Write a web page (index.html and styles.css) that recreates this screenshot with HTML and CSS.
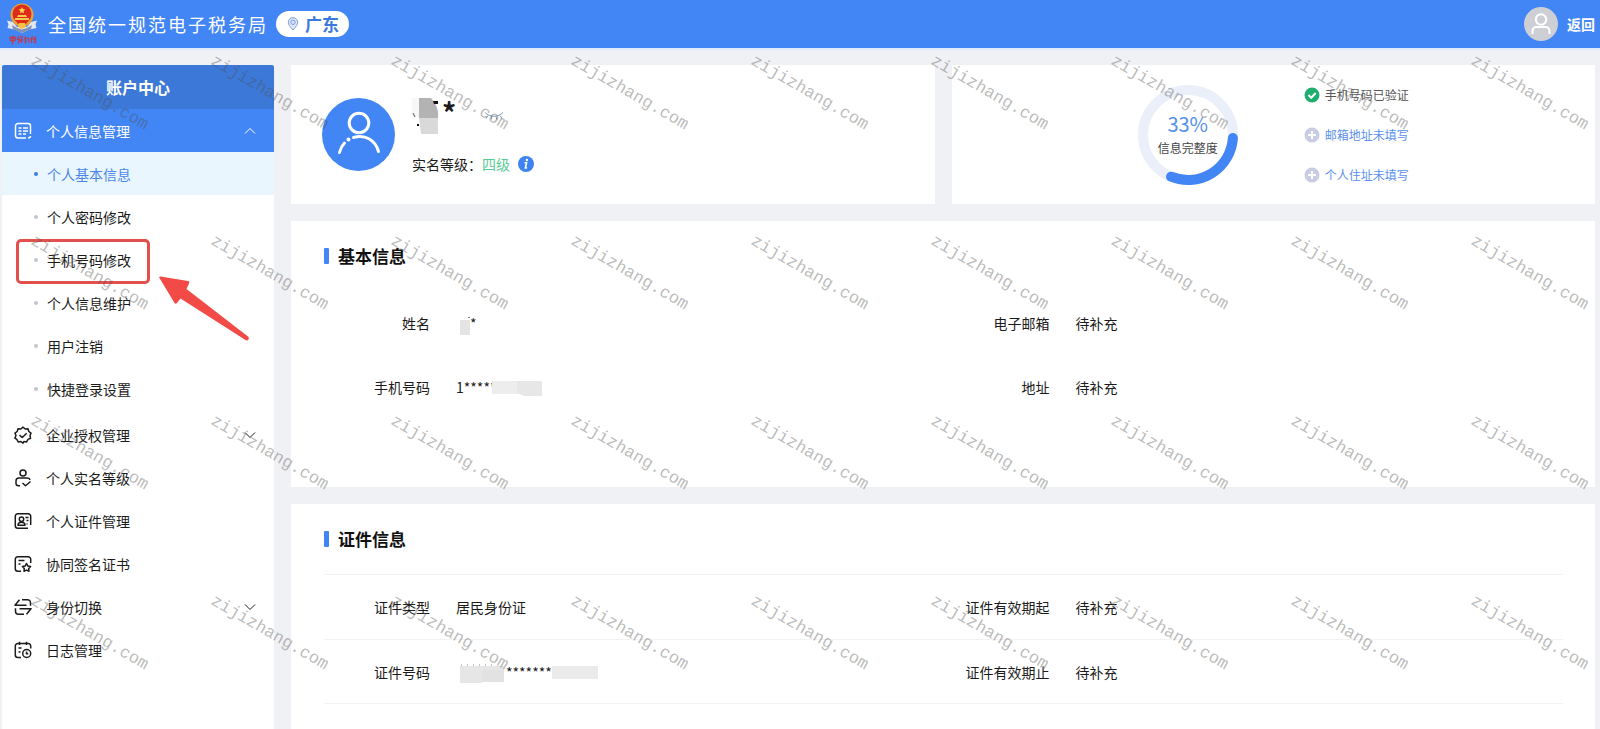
FILE: index.html
```html
<!DOCTYPE html>
<html lang="zh-CN">
<head>
<meta charset="utf-8">
<meta name="viewport" content="width=device-width, initial-scale=1">
<title>账户中心</title>
<link rel="stylesheet" href="styles.css">
</head>
<body>
<header class="topbar">
  <svg class="emblem" viewBox="0 0 32 42" aria-hidden="true">
    <path d="M1 17.500 7 19l4 5h10l4-5 6-1.500-1.500 4 1 3.500-7 1.500L16 30l-7.500-3.500-7-1.500 1-3.500z" fill="#e3e8f0"/>
    <path d="M6 22l5 3 5 1.500 5-1.500 5-3-1 4-9 4-9-4z" fill="#8191b4"/>
    <circle cx="16" cy="12" r="11.500" fill="#e8a23c"/>
    <circle cx="16" cy="11" r="9.500" fill="#de2a1b"/>
    <path d="M16 4l1 2.100 2.300.3-1.700 1.600.4 2.300-2-1.100-2 1.100.4-2.300-1.700-1.600 2.300-.3z" fill="#f8d54a"/>
    <path d="M12 12h8l1 2H11zM9 15h14v2H9z" fill="#f5c84a"/>
    <path d="M10 18h12l-2 3h-8z" fill="#de2a1b"/>
    <path d="M13 20h6l1 4-4 2-4-2z" fill="#f3c044"/>
    <path d="M4 34.500h5.500l-.5 3H4.500zM7 32.500l-.5 9M13 33l-1.500 3 2 .5-1.500 4M14.500 34l2.500-.5M15.500 35v5M14 37.500l3-.5M19.500 33.500v7M18 36l3-1M18.500 39l2-1M22 34.500l1 5M24.500 36.500l2.500-3M25.500 35v5M27 37l2.500-2.500v5l-2-1" fill="none" stroke="#c2394f" stroke-width="1.300"/>
  </svg>
  <h1 class="site-title">全国统一规范电子税务局</h1>
  <button class="region" type="button">
    <svg class="pin" viewBox="0 0 12 14" aria-hidden="true"><path d="M6 13C3 9.500 1.300 7.600 1.300 5.300a4.700 4.700 0 0 1 9.400 0C10.700 7.600 9 9.500 6 13z"/><circle cx="6" cy="5.300" r="2.200"/></svg>
    广东
  </button>
  <a class="back" href="#">
    <svg class="user" viewBox="0 0 34 34" aria-hidden="true"><circle cx="17" cy="17" r="17" fill="#cdcfd4" stroke="none"/><circle cx="17" cy="12.500" r="5.200"/><path d="M8.500 27v-3a4 4 0 0 1 4-4h9a4 4 0 0 1 4 4v3"/></svg>
    返回
  </a>
</header>

<div class="layout">
  <nav class="sidebar" aria-label="账户中心">
    <h2 class="side-title">账户中心</h2>
    <ul class="menu">
      <li>
        <a class="item open" href="#">
          <svg class="ico" viewBox="0 0 18 18" aria-hidden="true"><path d="M16.500 12V4a2.500 2.500 0 0 0-2.500-2.500H4A2.500 2.500 0 0 0 1.500 4v9.500a2.500 2.500 0 0 0 2.500 2.500h8M4.500 6h3M9 6h5M4.500 9h3M9 9h5M4.500 12h3M9 12h3M14 16c1.500 0 2.500-.8 2.500-2"/></svg>
          个人信息管理
          <svg class="chev" viewBox="0 0 12 8" aria-hidden="true"><path d="M1 6.500 6 1.500l5 5"/></svg>
        </a>
        <ul class="submenu">
          <li><a class="sub current" href="#">个人基本信息</a></li>
          <li><a class="sub" href="#">个人密码修改</a></li>
          <li class="marked"><a class="sub" href="#">手机号码修改</a>
            <span class="frame"></span>
            <svg class="arrow" viewBox="0 0 92 66" aria-hidden="true"><path d="M1.500 2Q0 .5 2.500.5L30 5q2 .5 1 2.500L28.500 13 90 60.500q1.500 1.500.5 3t-3 .5L22.500 22.500 19 27q-1.500 1.500-2.500 0z" fill="#f24b47"/></svg>
          </li>
          <li><a class="sub" href="#">个人信息维护</a></li>
          <li><a class="sub" href="#">用户注销</a></li>
          <li><a class="sub" href="#">快捷登录设置</a></li>
        </ul>
      </li>
      <li><a class="item" href="#">
        <svg class="ico" viewBox="0 0 18 18" aria-hidden="true"><path d="M9 1.200 11.200 3 14 2.800l.8 2.700 2.200 1.700-1 2.300.6 2.800-2.600 1.100-1.400 2.500-2.800-.4L9 17.200l-2-1.700-2.800.4-1.400-2.500L.9 12.100 2 9.500 1 7.200l2.200-1.700L4 2.800 6.800 3zM5.500 9l2.700 2.500 4.500-4.300"/></svg>
        企业授权管理
        <svg class="chev" viewBox="0 0 12 8" aria-hidden="true"><path d="m1 1.500 5 5 5-5"/></svg>
      </a></li>
      <li><a class="item" href="#">
        <svg class="ico" viewBox="0 0 18 18" aria-hidden="true"><circle cx="9" cy="4" r="3"/><path d="M6 16.700H4.500a2.500 2.500 0 0 1-2.500-2.500V12a3 3 0 0 1 3-3h8.500a2.500 2.500 0 0 1 2.500 2M8.500 14l3 2.700 5-4.200"/></svg>
        个人实名等级
      </a></li>
      <li><a class="item" href="#">
        <svg class="ico" viewBox="0 0 18 18" aria-hidden="true"><path d="M14 16.200H3.800a2.500 2.500 0 0 1-2.500-2.500V4.200a2.500 2.500 0 0 1 2.500-2.500h10.400a2.500 2.500 0 0 1 2.500 2.500V13M11.500 5.500h3M12.500 8.500h2M4 13.200c0-2 1-3 3.500-3s3.500 1 3.500 3zM12.500 12h1"/><circle cx="7.500" cy="7.200" r="2.200"/></svg>
        个人证件管理
      </a></li>
      <li><a class="item" href="#">
        <svg class="ico" viewBox="0 0 18 18" aria-hidden="true"><path d="M7 16.200H3.800a2.500 2.500 0 0 1-2.500-2.500V4.200a2.500 2.500 0 0 1 2.500-2.500h10.400a2.500 2.500 0 0 1 2.500 2.500V8M4.500 5.500h6M4.500 9h2M12.500 8.500l1.300 2.400 2.800.5-1.900 2 .3 2.800-2.500-1.100-2.500 1.100.3-2.800-1.900-2 2.800-.5z"/></svg>
        协同签名证书
      </a></li>
      <li><a class="item" href="#">
        <svg class="ico" viewBox="0 0 18 18" aria-hidden="true"><path d="M5.500 1.700 1 7.200h11.500M8 1.700h5.500a3 3 0 0 1 3 3v3M12.500 16.200l4.500-5.500H5.500M10 16.200H4.500a3 3 0 0 1-3-3v-3"/></svg>
        身份切换
        <svg class="chev" viewBox="0 0 12 8" aria-hidden="true"><path d="m1 1.500 5 5 5-5"/></svg>
      </a></li>
      <li><a class="item" href="#">
        <svg class="ico" viewBox="0 0 18 18" aria-hidden="true"><path d="M7 16.500H3.800a2.500 2.500 0 0 1-2.500-2.500V5a2.500 2.500 0 0 1 2.500-2.500h10.400a2.500 2.500 0 0 1 2.500 2.500v2.500M5.500.8V4M12.500.8V4M4.500 7h3M4.500 11h2M12.500 10.500v2.200h1.800"/><circle cx="12.700" cy="12.500" r="4"/></svg>
        日志管理
      </a></li>
    </ul>
  </nav>

  <main class="content">
    <div class="summary">
      <section class="card profile">
        <svg class="portrait" viewBox="0 0 73 73" aria-hidden="true"><circle cx="36.500" cy="36.500" r="36.500" fill="#4285f4"/><g fill="none" stroke="#fff" stroke-width="3" stroke-linecap="round"><circle cx="37" cy="25" r="9.800"/><path d="M31.500 39.500c12-3.500 22 3 25 14M17.500 54.500c1-4 2.500-7 5-9.500"/></g><circle cx="26.500" cy="41.500" r="2" fill="#fff"/></svg>
        <div class="who">
          <div class="name">
            <svg class="mask-name" viewBox="0 0 30 40" aria-hidden="true"><path d="M0 2h8v19H0z" fill="#f7f7f8"/><path d="M7 2h12q6 7 7 14v6H7z" fill="#b3b3b4"/><path d="M7 22h19v16H9z" fill="#d9d9da"/><path d="M21 5h5v3h-4zM5 28h2v2H5z" fill="#111"/><path d="M1 17l2 4" stroke="#555"/></svg>
            <b>*</b>
            <button class="eye" type="button" aria-label="显示姓名"><svg viewBox="0 0 20 12" aria-hidden="true"><path d="M1 2.500c5 5 13 5 18 0M4 5.500l-2 3M8 6.500l-.8 3M12 6.500l.8 3M16 5.500l2 3"/></svg></button>
          </div>
          <p class="level">实名等级：<span>四级</span>
            <svg class="info" viewBox="0 0 16 16" aria-hidden="true"><circle cx="8" cy="8" r="8" fill="#3f83f3"/><path d="M6.500 6.800h2L7.400 12h1.700" fill="none" stroke="#fff" stroke-width="1.600"/><circle cx="8.900" cy="4" r="1.200" fill="#fff"/></svg>
          </p>
        </div>
      </section>
      <section class="card progress">
        <div class="ring">
          <svg class="donut" viewBox="0 0 100 100" aria-hidden="true"><circle cx="50" cy="50" r="45" stroke="#ebeff9"/><path d="M94.900 53.100A45 45 0 0 1 33.100 91.700" stroke="#4285f4"/></svg>
          <div class="ring-text"><strong>33%</strong><span>信息完整度</span></div>
        </div>
        <ul class="checks">
          <li><svg viewBox="0 0 16 16" aria-hidden="true"><circle cx="8" cy="8" r="7.500" fill="#1fae6d" stroke="none"/><path d="m4.500 8 2.700 2.700 4.500-4.700"/></svg>手机号码已验证</li>
          <li><svg viewBox="0 0 16 16" aria-hidden="true"><circle cx="8" cy="8" r="7.500" fill="#c9cde3" stroke="none"/><path d="M8 4v8M4 8h8"/></svg><a href="#">邮箱地址未填写</a></li>
          <li><svg viewBox="0 0 16 16" aria-hidden="true"><circle cx="8" cy="8" r="7.500" fill="#c9cde3" stroke="none"/><path d="M8 4v8M4 8h8"/></svg><a href="#">个人住址未填写</a></li>
        </ul>
      </section>
    </div>

    <section class="card basic">
      <h2 class="card-title">基本信息</h2>
      <dl class="row">
        <div><dt>姓名</dt><dd><svg class="mask-short" viewBox="0 0 14 24" aria-hidden="true"><path d="M4 9h10v15H4z" fill="#e4e4e5"/><path d="M12 6h2v1h-2z" fill="#777"/></svg>*</dd></div>
        <div><dt>电子邮箱</dt><dd>待补充</dd></div>
      </dl>
      <dl class="row">
        <div><dt>手机号码</dt><dd>1*****<svg class="mask-phone" viewBox="0 0 50 20" aria-hidden="true"><path d="M0 4h50v13H0z" fill="#ededee"/><path d="M25 4h25v15H32l-7-3z" fill="#e7e7e8"/></svg></dd></div>
        <div><dt>地址</dt><dd>待补充</dd></div>
      </dl>
    </section>

    <section class="card papers">
      <h2 class="card-title">证件信息</h2>
      <dl class="row lined">
        <div><dt>证件类型</dt><dd>居民身份证</dd></div>
        <div><dt>证件有效期起</dt><dd>待补充</dd></div>
      </dl>
      <dl class="row lined">
        <div><dt>证件号码</dt><dd><svg class="mask-id" viewBox="0 0 50 24" aria-hidden="true"><path d="M4 6h44v14H26v3H4z" fill="#e6e6e7"/><path d="M26 10h22v12H26z" fill="#e2e2e3"/><path d="M5 5h1M11 5h1M17 5h1M23 5h1M29 5h1M35 5h1" stroke="#888"/></svg>*******<svg class="mask-tail" viewBox="0 0 46 14" aria-hidden="true"><path d="M0 1h46v13H0z" fill="#ebebec"/></svg></dd></div>
        <div><dt>证件有效期止</dt><dd>待补充</dd></div>
      </dl>
    </section>
  </main>
</div>

<div class="watermark" aria-hidden="true">
  <span>zijizhang.com</span><span>zijizhang.com</span><span>zijizhang.com</span><span>zijizhang.com</span><span>zijizhang.com</span><span>zijizhang.com</span><span>zijizhang.com</span><span>zijizhang.com</span><span>zijizhang.com</span>
  <span>zijizhang.com</span><span>zijizhang.com</span><span>zijizhang.com</span><span>zijizhang.com</span><span>zijizhang.com</span><span>zijizhang.com</span><span>zijizhang.com</span><span>zijizhang.com</span><span>zijizhang.com</span>
  <span>zijizhang.com</span><span>zijizhang.com</span><span>zijizhang.com</span><span>zijizhang.com</span><span>zijizhang.com</span><span>zijizhang.com</span><span>zijizhang.com</span><span>zijizhang.com</span><span>zijizhang.com</span>
  <span>zijizhang.com</span><span>zijizhang.com</span><span>zijizhang.com</span><span>zijizhang.com</span><span>zijizhang.com</span><span>zijizhang.com</span><span>zijizhang.com</span><span>zijizhang.com</span><span>zijizhang.com</span>
</div>
</body>
</html>
```

FILE: styles.css
```css
* { box-sizing: border-box; }
body {
  margin: 0;
  min-height: 100vh;
  display: flex;
  flex-direction: column;
  position: relative;
  background: #f0f1f4;
  color: #1b1b1b;
  font: 14px/20px "Noto Sans CJK SC", sans-serif;
}
h1, h2, p, ul, dl, dd { margin: 0; padding: 0; }
ul { list-style: none; }
a { color: inherit; text-decoration: none; }
button { font: inherit; border: 0; padding: 0; cursor: pointer; }
svg { flex: none; display: block; }

.topbar {
  display: flex;
  align-items: center;
  height: 48px;
  padding: 0 5px 0 6px;
  background: #4285f4;
  color: #fff;
  box-shadow: 0 2px 2px #dfe8fb;
}
.emblem { width: 32px; height: 42px; }
.site-title { margin-left: 10px; font-size: 18px; font-weight: 400; letter-spacing: 2px; }
.region {
  display: flex;
  align-items: center;
  gap: 6px;
  height: 26px;
  margin-left: 8px;
  padding: 0 10px 0 11px;
  border-radius: 13px;
  background: #fff;
  color: #3d78dc;
  font-size: 17px;
  font-weight: 700;
}
.pin { width: 12px; height: 14px; fill: #dbe6fb; stroke: #7d9fe0; }
.back { display: flex; align-items: center; gap: 9px; margin-left: auto; font-weight: 700; }
.user { width: 34px; height: 34px; fill: none; stroke: #fff; stroke-width: 2; }

.layout { display: flex; flex: 1; gap: 17px; padding: 17px 5px 0 2px; }
.sidebar { width: 272px; flex: none; background: #fff; border-radius: 2px 2px 0 0; overflow: hidden; }
.side-title { background: #3c78d8; color: #fff; font-size: 16px; line-height: 44px; text-align: center; }
.item { display: flex; align-items: center; gap: 14px; height: 43px; padding: 0 18px 0 12px; }
.open { background: #4285f4; color: #fff; }
.ico { width: 18px; height: 18px; fill: none; stroke: currentColor; stroke-width: 1.500; stroke-linejoin: round; }
.chev { width: 12px; height: 8px; margin-left: auto; fill: none; stroke: currentColor; }
.submenu { padding: 0 0 3px; }
.sub { display: flex; align-items: center; gap: 9px; height: 43px; padding-left: 32px; }
.sub::before { content: ""; width: 4px; height: 4px; border-radius: 50%; background: #c4c6ca; }
.current { background: #eaf6fd; color: #4a86e8; }
.current::before { background: #3f7be8; }
.marked { position: relative; }
.frame { position: absolute; left: 14px; top: 1px; width: 134px; height: 45px; border: 3px solid #e2504e; border-radius: 5px; }
.arrow { position: absolute; left: 156px; top: 38px; width: 92px; height: 66px; }

.content { flex: 1; min-width: 0; display: flex; flex-direction: column; gap: 17px; }
.card { background: #fff; }
.summary { display: grid; grid-template-columns: 1fr 1fr; gap: 17px; }
.profile { display: flex; align-items: center; gap: 17px; min-height: 139px; padding: 0 31px; }
.portrait { width: 73px; height: 73px; }
.who { display: flex; flex-direction: column; gap: 18px; }
.name { display: flex; align-items: center; height: 40px; }
.name b { font-size: 28px; line-height: 32px; align-self: flex-start; }
.mask-name { width: 30px; height: 40px; }
.eye { margin-left: 28px; background: none; }
.eye svg { width: 20px; height: 12px; fill: none; stroke: #7f9ab3; stroke-width: 1; }
.level { display: flex; align-items: center; }
.level span { color: #59cb94; }
.info { width: 16px; height: 16px; margin-left: 8px; }

.progress { display: flex; align-items: center; justify-content: center; gap: 66px; }
.ring { display: grid; place-items: center; }
.ring > * { grid-area: 1 / 1; }
.donut { width: 100px; height: 100px; fill: none; stroke-width: 10; stroke-linecap: round; }
.ring-text { display: flex; flex-direction: column; align-items: center; gap: 2px; font-size: 12px; color: #444; }
.ring-text strong { font-size: 20px; font-weight: 400; line-height: 24px; color: #5590ea; }
.checks { display: flex; flex-direction: column; gap: 20px; font-size: 12px; color: #555; }
.checks li { display: flex; align-items: center; gap: 5px; }
.checks svg { width: 16px; height: 16px; fill: none; stroke: #fff; stroke-width: 2; }
.checks a { color: #5a8fee; }

.basic { padding: 0 32px 68px 33px; }
.papers { flex: 1; padding: 0 32px 24px 33px; }
.card-title { display: flex; align-items: center; gap: 9px; height: 70px; font-size: 17px; color: #111; }
.card-title::before { content: ""; width: 5px; height: 16px; border-radius: 1px; background: #4285f4; }
.row { display: grid; grid-template-columns: 1fr 1fr; min-height: 64px; }
.row > div { display: flex; align-items: center; gap: 26px; }
.row dt { width: 106px; text-align: right; }
.row dd { display: flex; align-items: center; }
.lined { border-top: 1px solid #f3f3f4; min-height: 65px; }
.lined:last-child { border-bottom: 1px solid #f3f3f4; }
.mask-short { width: 14px; height: 24px; }
.mask-phone { width: 50px; height: 20px; margin-left: -4px; }
.mask-id { width: 50px; height: 24px; }
.mask-tail { width: 46px; height: 14px; }

.watermark {
  position: absolute;
  inset: 48px 0 0;
  display: grid;
  grid-template-columns: repeat(9, 180px);
  grid-auto-rows: 180px;
  padding: 2px 0 0 32px;
  overflow: hidden;
  pointer-events: none;
  color: rgba(80, 80, 80, 0.4);
  font: 17px/20px "Liberation Mono", monospace;
}
.watermark span { transform: rotate(30deg); transform-origin: 0 50%; height: 20px; }
```
